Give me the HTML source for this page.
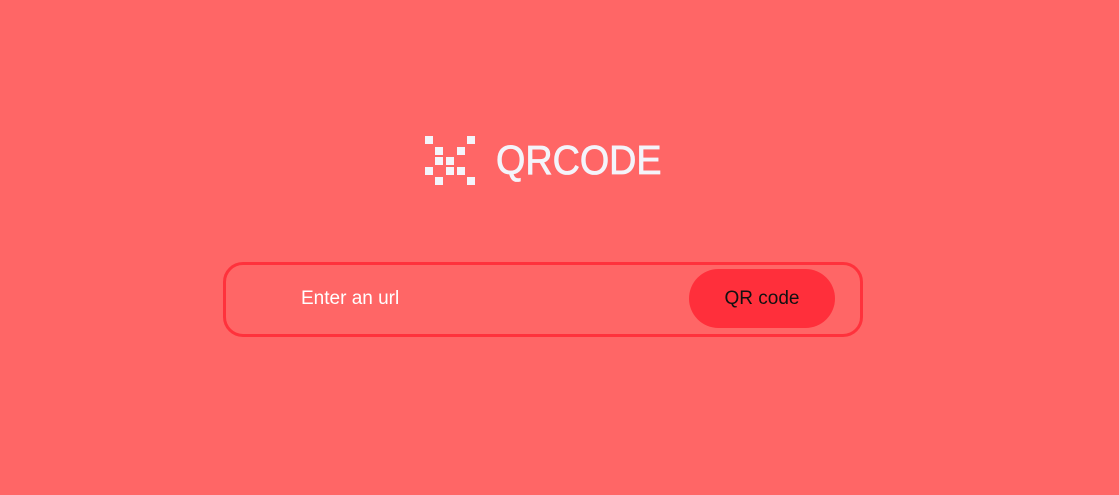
<!DOCTYPE html>
<html><head><meta charset="utf-8"><style>
html,body{margin:0;padding:0;width:1119px;height:495px;background:#ff6666;overflow:hidden;font-family:"Liberation Sans",sans-serif;}
.sq{position:absolute;width:8px;height:8px;background:#f4f4fa;}
.logo{position:absolute;left:496px;top:140px;font-size:41px;color:#f4f4fa;-webkit-text-stroke:0.8px #f4f4fa;transform-origin:left top;transform:scaleX(0.92);line-height:41px;}
.box{position:absolute;left:223px;top:262px;width:634px;height:69px;border:3px solid #ff323c;border-radius:20px;box-sizing:content-box;}
.ph{position:absolute;left:301px;top:288px;font-size:19px;color:#fff;}
.btn{position:absolute;left:689px;top:269px;width:146px;height:59px;border-radius:30px;background:#ff2f3b;color:#111;font-size:19px;text-align:center;line-height:59px;}
</style></head><body>
<div class="sq" style="left:425px;top:136px"></div>
<div class="sq" style="left:467px;top:136px"></div>
<div class="sq" style="left:435px;top:147px"></div>
<div class="sq" style="left:457px;top:147px"></div>
<div class="sq" style="left:435px;top:157px"></div>
<div class="sq" style="left:446px;top:157px"></div>
<div class="sq" style="left:425px;top:167px"></div>
<div class="sq" style="left:446px;top:167px"></div>
<div class="sq" style="left:457px;top:167px"></div>
<div class="sq" style="left:435px;top:177px"></div>
<div class="sq" style="left:467px;top:177px"></div>
<div class="logo">QRCODE</div>
<div class="box"></div>
<div class="ph">Enter an url</div>
<div class="btn">QR code</div>
</body></html>
